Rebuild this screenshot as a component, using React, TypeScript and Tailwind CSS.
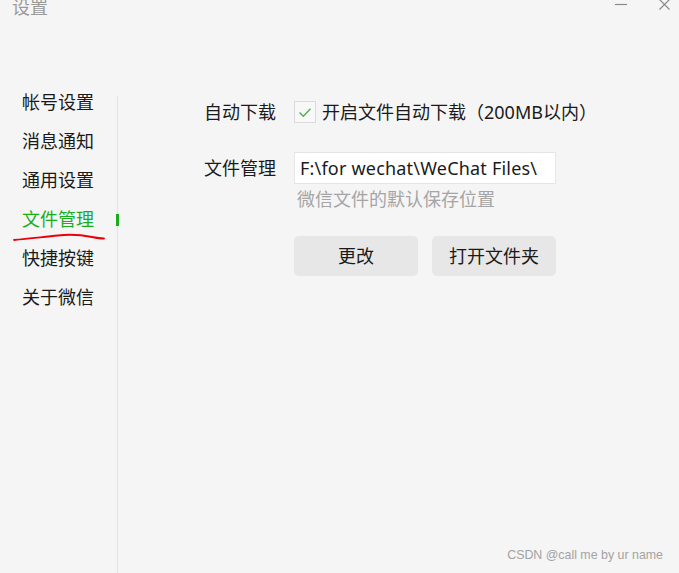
import React from "react";

const font = { fontFamily: '"Noto Sans", "Noto Sans CJK SC", sans-serif' };

export default function App() {
  const items = ["帐号设置", "消息通知", "通用设置", "文件管理", "快捷按键", "关于微信"];
  return (
    <div
      className="relative w-[679px] h-[573px] overflow-hidden bg-[#f5f5f5] text-[#1a1a1a]"
      style={font}
    >
      {/* title bar */}
      <div className="flex items-start h-[83px]">
        <div className="ml-[12px] -mt-[6px] text-[18px] leading-[26px] text-[#9a9a9a]">设置</div>
        <div className="ml-auto flex items-start">
          <svg width="12" height="10" viewBox="0 0 12 10" className="mt-[0px] mr-[32px]">
            <line x1="0" y1="4.5" x2="12" y2="4.5" stroke="#8a8a8a" strokeWidth="1.2" />
          </svg>
          <svg width="11" height="11" viewBox="0 0 11 11" className="-mt-[1px] mr-[9px]">
            <path d="M0.5 0.5 L10.5 10.5 M10.5 0.5 L0.5 10.5" stroke="#8a8a8a" strokeWidth="1.2" />
          </svg>
        </div>
      </div>

      <div className="flex h-[490px]">
        {/* sidebar */}
        <div className="w-[117px] flex flex-col">
          {items.map((t, i) => (
            <div
              key={t}
              className={
                "relative h-[39px] leading-[39px] pl-[22px] text-[18px] " +
                (i === 3 ? "text-[#1aad19]" : "text-[#1a1a1a]")
              }
            >
              {t}
              {i === 3 && (
                <>
                  <div className="absolute right-[-2px] top-[14px] w-[3px] h-[12px] bg-[#1aad19]" />
                  <svg
                    className="absolute left-0 top-[32px]"
                    width="110"
                    height="12"
                    viewBox="0 0 110 12"
                  >
                    <path
                      d="M14 8 C 30 6, 45 5, 58 3.5 C 70 2, 82 3, 92 5 C 97 6, 101 6.5, 104 6.5"
                      fill="none"
                      stroke="#e8000b"
                      strokeWidth="1.8"
                      strokeLinecap="round"
                    />
                  </svg>
                </>
              )}
            </div>
          ))}
        </div>
        <div className="w-px mt-[13px] bg-[#e2e2e2]" />

        {/* content */}
        <div className="flex-1 pl-[86px] pt-[18px]">
          <div className="flex items-center h-[22px]">
            <div className="w-[90px] text-[18px] leading-[22px]">自动下载</div>
            <div className="w-[22px] h-[22px] border border-[#dadada] bg-[#f8f8f8] flex items-center justify-center">
              <svg width="14" height="11" viewBox="0 0 14 11">
                <path d="M1.5 5.5 L5.3 9.2 L12.5 1.8" fill="none" stroke="#4caf50" strokeWidth="1.4" />
              </svg>
            </div>
            <div className="ml-[6px] text-[18px] leading-[22px] whitespace-nowrap">
              开启文件自动下载（200MB以内）
            </div>
          </div>

          <div className="flex items-center mt-[29px] h-[32px]">
            <div className="w-[90px] text-[18px] leading-[22px]">文件管理</div>
            <div className="w-[262px] h-[32px] bg-white border border-[#e6e6e6] pl-[5px] text-[18px] leading-[30px] whitespace-nowrap overflow-hidden tracking-[0.2px]">
              F:\for wechat\WeChat Files\
            </div>
          </div>
          <div className="ml-[93px] mt-[2px] text-[18px] leading-[26px] text-[#a5a5a5]">
            微信文件的默认保存位置
          </div>

          <div className="flex gap-[14px] ml-[90px] mt-[24px]">
            <button className="w-[124px] h-[40px] rounded-[5px] bg-[#e7e7e7] text-[18px] text-[#1a1a1a]">
              更改
            </button>
            <button className="w-[124px] h-[40px] rounded-[5px] bg-[#e7e7e7] text-[18px] text-[#1a1a1a]">
              打开文件夹
            </button>
          </div>
        </div>
      </div>

      <div
        className="absolute right-[16px] bottom-[8px] text-[12.4px] text-[#a3a3a3]"
        style={{ fontFamily: '"Liberation Sans", Arial, sans-serif' }}
      >
        CSDN @call me by ur name
      </div>
    </div>
  );
}
